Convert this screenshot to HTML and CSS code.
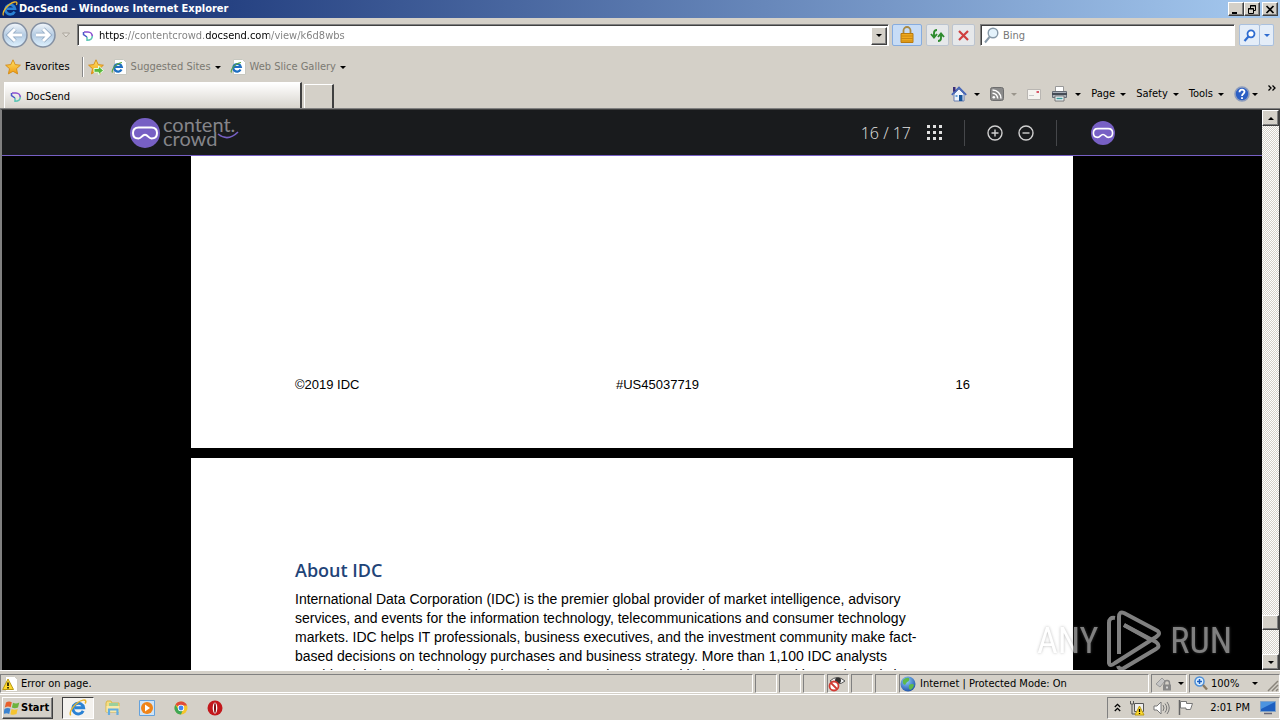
FILE: index.html
```html
<!DOCTYPE html>
<html lang="en">
<head>
<meta charset="utf-8">
<title>DocSend - Windows Internet Explorer</title>
<link rel="stylesheet" href="styles.css">
</head>
<body>
<svg class="defs" aria-hidden="true">
  <defs>
    <linearGradient id="gold" x1="0" y1="0" x2="0" y2="1"><stop offset="0" stop-color="#ffe46a"/><stop offset="1" stop-color="#f09a10"/></linearGradient>
    <linearGradient id="orb" x1="0" y1="0" x2="0" y2="1"><stop offset="0" stop-color="#f4f8fc"/><stop offset=".5" stop-color="#b4cbe2"/><stop offset="1" stop-color="#dff2ff"/></linearGradient>
    <radialGradient id="globe" cx=".4" cy=".3" r=".8"><stop offset="0" stop-color="#8fd0ff"/><stop offset="1" stop-color="#1546a0"/></radialGradient>
  </defs>
  <symbol id="i-e" viewBox="0 0 16 16">
    <path d="M12.6 10.6A4.8 4.8 0 1 1 13 7.800H5" fill="none" stroke="#2a82d4" stroke-width="2.600"/>
    <path d="M1.500 14.500C-.5 11 6 2.500 12.500 1c3-.6 2.700 1.500 1.800 3" fill="none" stroke="#e8b52c" stroke-width="1.300"/>
  </symbol>
  <symbol id="i-page-e" viewBox="0 0 16 16">
    <path d="M3.500 .5h9l3 3v12h-12z" fill="#fff" stroke="#c8c8c0"/>
    <path d="M10.500 10.500A3.800 3.800 0 1 1 10.800 8H4" fill="none" stroke="#1e6fc2" stroke-width="2.200"/>
    <path d="M1.500 13.500C0 11 5 4 11 3.500" fill="none" stroke="#58a63c" stroke-width="1.100"/>
  </symbol>
  <symbol id="i-docsend" viewBox="0 0 12 12">
    <path d="M2 2h4a4.300 4.300 0 0 1 4.300 4.300" fill="none" stroke="#8a4fd0" stroke-width="1.700"/>
    <path d="M10.300 6c0 2.800-1.600 4.300-5.300 4.300V7" fill="none" stroke="#5cc4b4" stroke-width="1.500"/>
    <path d="M1.500 2v2.500L5 7" fill="none" stroke="#4a58c8" stroke-width="1.500"/>
  </symbol>
  <symbol id="i-star" viewBox="0 0 16 16">
    <path d="M8 .8l2.200 4.800 5.200.6-3.900 3.500 1.100 5.200L8 12.300l-4.600 2.600 1.100-5.200L.6 6.200l5.200-.6z" fill="url(#gold)" stroke="#d48a14" stroke-width=".9"/>
  </symbol>
  <symbol id="i-mask" viewBox="0 0 30 30">
    <circle cx="15" cy="15" r="15" fill="#7760c4"/>
    <path d="M8.500 9.500h13q5.500 0 5.500 5.500t-5.500 5.500c-3 0-3.500-3.700-6.500-3.700s-3.500 3.700-6.500 3.700Q3 20.500 3 15t5.500-5.500z" fill="none" stroke="#fff" stroke-width="2"/>
  </symbol>
  <symbol id="i-win" viewBox="0 0 16 16">
    <path d="M2 2.500C4 1 6 1.200 7.800 2.200L6.700 7.300C5 6.300 3 6.200.8 7.500z" fill="#e8602c"/>
    <path d="M9 2.700c2 1 4 .9 6.300-.2L14 7.600c-2.300 1-4.200 1-6.100 0z" fill="#6cb33e"/>
    <path d="M.5 9C2.700 7.700 4.700 7.800 6.400 8.700L5.200 14C3.300 12.700 1.500 13-.6 14z" fill="#3b83d0"/>
    <path d="M7.600 9c2 .9 4 .9 6.100 0L12.500 14c-2.300 1-4.200 1-6.100.2z" fill="#f5c431"/>
  </symbol>
</svg>

<div class="browser">
  <header class="titlebar">
    <svg class="ic16"><use href="#i-e"/></svg>
    <h1 class="title">DocSend - Windows Internet Explorer</h1>
    <div class="window-buttons">
      <button class="bevel winbtn" aria-label="Minimize"><svg width="10" height="9"><path d="M1 7h5v2H1z"/></svg></button>
      <button class="bevel winbtn" aria-label="Restore"><svg width="10" height="9"><path d="M3.500 3V.5h5v5H7M3 1h6M1.500 3.500h5v5h-5zM1 4h6" fill="none" stroke="#000"/></svg></button>
      <button class="bevel winbtn winbtn-close" aria-label="Close"><svg width="10" height="9"><path d="M1.500 1l7 7M8.500 1l-7 7" fill="none" stroke="#000" stroke-width="1.700"/></svg></button>
    </div>
  </header>

  <nav class="address-row" aria-label="Navigation">
    <div class="travel">
      <button class="plain" aria-label="Back"><svg width="26" height="26" viewBox="0 0 26 26"><circle cx="13" cy="13" r="12" fill="url(#orb)" stroke="#8490a2" stroke-width="1.500"/><path d="M13 7l-6 6 6 6M8 13h12" fill="none" stroke="#8fa6c0" stroke-width="4.500"/><path d="M13 7l-6 6 6 6M8 13h12" fill="none" stroke="#fff" stroke-width="3"/></svg></button>
      <button class="plain" aria-label="Forward"><svg width="26" height="26" viewBox="0 0 26 26"><circle cx="13" cy="13" r="12" fill="url(#orb)" stroke="#8490a2" stroke-width="1.500"/><path d="M13 7l6 6-6 6M18 13H6" fill="none" stroke="#8fa6c0" stroke-width="4.500"/><path d="M13 7l6 6-6 6M18 13H6" fill="none" stroke="#fff" stroke-width="3"/></svg></button>
      <button class="plain" aria-label="Recent pages"><svg width="8" height="6"><path d="M.5 1h7L4 5z" fill="#e8e4de" stroke="#aaa59c"/></svg></button>
    </div>
    <div class="field address">
      <svg class="ic12"><use href="#i-docsend"/></svg>
      <input class="url" type="text" aria-label="Address" value="https://contentcrowd.docsend.com/view/k6d8wbs">
      <button class="bevel drop" aria-label="Show addresses"><i class="caret"></i></button>
    </div>
    <button class="soft lock" aria-label="Security report"><svg width="14" height="18" viewBox="0 0 14 18"><path d="M3.500 8V4.500a3.500 3.500 0 0 1 7 0V8" fill="none" stroke="#a98a45" stroke-width="1.800"/><path d="M1 7.500h12v9H1z" fill="#efa91f" stroke="#b87a10"/><path d="M1 10h12M1 12.500h12M1 15h12" stroke="#c98813"/></svg></button>
    <button class="soft" aria-label="Refresh"><svg width="15" height="15" viewBox="0 0 15 15"><path d="M7 2Q4 2 4 5v4M1 6l3 3.500L7 6" fill="none" stroke="#2e8b2e" stroke-width="1.900"/><path d="M8 13q3 0 3-3V6M8 9l3-3.500L14 9" fill="none" stroke="#2e8b2e" stroke-width="1.900"/></svg></button>
    <button class="soft" aria-label="Stop"><svg width="13" height="13"><path d="M2 2l9 9M11 2l-9 9" stroke="#cf3f3f" stroke-width="2.200"/></svg></button>
    <div class="field search">
      <svg width="15" height="17" viewBox="0 0 15 17"><circle cx="9" cy="6" r="4.800" fill="#e4f2fb" stroke="#8799a8" stroke-width="1.400"/><path d="M5.500 10L1 15.500" stroke="#8799a8" stroke-width="2"/></svg>
      <input type="text" aria-label="Search" placeholder="Bing">
    </div>
    <div class="search-go">
      <button class="soft" aria-label="Go"><svg width="13" height="13"><circle cx="8" cy="4.800" r="3.500" fill="#fff" stroke="#2e6cd0" stroke-width="1.800"/><path d="M5.500 7.500L1.500 12" stroke="#2e6cd0" stroke-width="2.200"/></svg></button>
      <button class="soft soft-narrow" aria-label="Search options"><i class="caret caret-blue"></i></button>
    </div>
  </nav>

  <nav class="favorites-row" aria-label="Favorites">
    <button class="plain fav"><svg class="ic16"><use href="#i-star"/></svg>Favorites</button>
    <span class="vline"></span>
    <button class="plain" aria-label="Add to Favorites Bar"><svg width="16" height="16" viewBox="0 0 16 16"><use href="#i-star"/><path d="M6 9.500h4.500V7l5 4.500-5 4.300v-2.500H6z" fill="#58b83c" stroke="#e8ffe0"/></svg></button>
    <button class="plain fav dim"><svg class="ic16"><use href="#i-page-e"/></svg>Suggested Sites<i class="caret"></i></button>
    <button class="plain fav dim gallery"><svg class="ic16"><use href="#i-page-e"/></svg>Web Slice Gallery<i class="caret"></i></button>
  </nav>

  <div class="tab-row">
    <button class="tab"><svg class="ic12"><use href="#i-docsend"/></svg>DocSend</button>
    <button class="new-tab" aria-label="New tab"></button>
    <div class="commands">
      <button class="plain cmd" aria-label="Home"><svg width="16" height="16" viewBox="0 0 16 16"><path d="M3 8v7h10V8L8 3z" fill="#eef4fc" stroke="#6a7fb0"/><path d="M.8 8.800L8 1.500l7.200 7.300" fill="none" stroke="#4565b8" stroke-width="1.700"/><path d="M2 1h2.500v4L2 6z" fill="#3a2d78"/><path d="M8 9h3.500v6H8z" fill="#17549a"/><path d="M4.500 9h2v2h-2z" fill="#66a3d8"/></svg><i class="caret"></i></button>
      <button class="plain cmd" aria-label="Feeds"><svg width="14" height="14" viewBox="0 0 14 14"><rect x=".5" y=".5" width="13" height="13" rx="2" fill="#8a8a8a" stroke="#6e6e6e"/><circle cx="3.800" cy="10.300" r="1.300" fill="#fff"/><path d="M2.500 6.300a5.200 5.200 0 0 1 5.200 5.200M2.500 3a8.500 8.500 0 0 1 8.500 8.500" fill="none" stroke="#fff" stroke-width="1.500"/></svg><i class="caret caret-dim"></i></button>
      <button class="plain cmd" aria-label="Read mail"><svg width="14" height="11"><path d="M.5 .5h13v10H.5z" fill="#f6f4f0" stroke="#b9b6b2"/><path d="M9.500 2H12v2H9.500z" fill="#d85a6a"/><path d="M2 6.500h5" stroke="#c8c8c8"/></svg></button>
      <button class="plain cmd" aria-label="Print"><svg width="17" height="16" viewBox="0 0 17 16"><path d="M4.500 .5h8V6h-8z" fill="#fff" stroke="#999"/><path d="M1.500 5.500h14v6h-14z" fill="#aab0b8" stroke="#666c76"/><path d="M1 7h15v2H1z" fill="#454b56"/><path d="M4 10h9v5H4z" fill="#eef5fa" stroke="#777"/><path d="M5.500 12.500h6" stroke="#3d9a9a" stroke-width="1.500"/></svg><i class="caret"></i></button>
      <button class="plain cmd menu">Page<i class="caret"></i></button>
      <button class="plain cmd menu">Safety<i class="caret"></i></button>
      <button class="plain cmd menu">Tools<i class="caret"></i></button>
      <button class="plain cmd help" aria-label="Help"><svg width="16" height="16" viewBox="0 0 16 16"><circle cx="8" cy="8" r="7" fill="#2c5fc4" stroke="#8d9cbc" stroke-width="1.600"/><path d="M5.500 6.200c0-3.400 5-3.200 5-.4C10.500 7.800 8 7.600 8 10M8 11.200v1.800" fill="none" stroke="#fff" stroke-width="1.800"/></svg><i class="caret"></i></button>
      <button class="plain more" aria-label="More commands"><svg width="8" height="6"><path d="M.5 .5L3 3 .5 5.500M4.500 .5L7 3 4.500 5.500" fill="none" stroke="#000" stroke-width="1.300"/></svg></button>
    </div>
  </div>

  <div class="window">
    <main class="viewer">
      <div class="viewer-bar">
        <a class="brand" href="#" aria-label="Content Crowd">
          <svg width="30" height="30"><use href="#i-mask"/></svg>
          <span class="brand-name"><span>content.</span><span>crowd<svg width="22" height="9"><path d="M1 3q10 8 20-2" fill="none" stroke="#7760c4" stroke-width="1.600"/></svg></span></span>
        </a>
        <div class="viewer-tools">
          <span class="count">16 / 17</span>
          <button class="plain" aria-label="Thumbnails"><svg width="15" height="15" fill="#e0e0e0"><path d="M0 0h3v3H0zM6 0h3v3H6zM12 0h3v3h-3zM0 6h3v3H0zM6 6h3v3H6zM12 6h3v3h-3zM0 12h3v3H0zM6 12h3v3H6zM12 12h3v3h-3z"/></svg></button>
          <span class="rule"></span>
          <button class="plain zoom-in" aria-label="Zoom in"><svg width="16" height="16" fill="none" stroke="#d0d0d0" stroke-width="1.400"><circle cx="8" cy="8" r="7"/><path d="M4.500 8h7M8 4.500v7"/></svg></button>
          <button class="plain zoom-out" aria-label="Zoom out"><svg width="16" height="16" fill="none" stroke="#d0d0d0" stroke-width="1.400"><circle cx="8" cy="8" r="7"/><path d="M4.500 8h7"/></svg></button>
          <span class="rule"></span>
          <a class="avatar" href="#" aria-label="Account"><svg width="24" height="24"><use href="#i-mask"/></svg></a>
        </div>
      </div>
      <div class="pages">
        <section class="sheet sheet-end">
          <footer class="sheet-footer"><span>©2019 IDC</span><span>#US45037719</span><span>16</span></footer>
        </section>
        <section class="sheet">
          <h2>About IDC</h2>
          <p>International Data Corporation (IDC) is the premier global provider of market intelligence, advisory<br>services, and events for the information technology, telecommunications and consumer technology<br>markets. IDC helps IT professionals, business executives, and the investment community make fact-<br>based decisions on technology purchases and business strategy. More than 1,100 IDC analysts<br>provide global, regional, and local expertise on technology and industry opportunities and trends in</p>
        </section>
      </div>
    </main>
    <div class="scrollbar">
      <button class="bevel scroll-btn" aria-label="Scroll up"><i class="caret caret-up"></i></button>
      <div class="track"><div class="bevel thumb"></div></div>
      <button class="bevel scroll-btn" aria-label="Scroll down"><i class="caret"></i></button>
    </div>
    <div class="watermark">
      <span>ANY</span>
      <svg width="56" height="62" viewBox="0 0 56 62" fill="none" stroke="#fff" stroke-width="4" stroke-linejoin="round"><path d="M9 8Q3 7 3 13V53Q4 57 9 53L50 27Q56 23 50 20L18 3Q13 1 13 7V44"/><path d="M18 15L50 32Q55 36 50 39L18 58Q13 60 12 56"/><path d="M18 15L43 29"/></svg>
      <span>RUN</span>
    </div>
  </div>

  <footer class="status">
    <div class="cell cell-main"><svg width="16" height="16"><path d="M3.500 .5h9l3 3v12h-12z" fill="#fff" stroke="#d0cdc4"/><path d="M6 3l5.500 10.500H.7z" fill="#ffd92e" stroke="#b99a12"/><path d="M6 6.500v3.500M6 11v1.500" stroke="#000" stroke-width="1.500"/></svg>Error on page.</div>
    <div class="cell"></div><div class="cell"></div><div class="cell"></div>
    <div class="cell"><svg width="18" height="17"><path d="M2 6q7-7 15 0-7 6-15 0z" fill="#f4f4f4" stroke="#555"/><circle cx="10" cy="5.500" r="3" fill="#333"/><circle cx="6" cy="11" r="4.500" fill="#fff" stroke="#d23a34" stroke-width="1.800"/><path d="M3 8l6 6" stroke="#d23a34" stroke-width="1.800"/></svg></div>
    <div class="cell"></div><div class="cell"></div>
    <div class="cell cell-zone"><svg width="16" height="16"><circle cx="8" cy="8" r="7.500" fill="url(#globe)"/><path d="M3 4q3-3 6-2 1 3-2 4l-2 3q-3-1-2-5zM9 9q4-2 5 0-1 4-4 5-2-2-1-5z" fill="#5fb94a"/></svg>Internet | Protected Mode: On</div>
    <div class="cell cell-filter"><svg width="17" height="16"><path d="M1 8l6-6 3 3-5 6z" fill="#c5c5c5" stroke="#999"/><path d="M9.500 9V7a2.500 2.500 0 0 1 5 0v2" fill="none" stroke="#888" stroke-width="1.400"/><path d="M8 8.500h8v6H8z" fill="#888"/><path d="M12 10.500v2" stroke="#fff" stroke-width="1.300"/></svg><i class="caret"></i></div>
    <div class="cell cell-zoom"><svg width="14" height="15"><circle cx="5.500" cy="5.500" r="4.500" fill="#dcefff" stroke="#4d8fd8" stroke-width="1.500"/><path d="M3 5.500h5M5.500 3v5" stroke="#1c5fc0" stroke-width="1.500"/><path d="M9 9l4 4.500" stroke="#8b7a62" stroke-width="2.400"/></svg><span>100%</span><i class="caret"></i><svg class="grip" width="12" height="12"><path d="M1 11L11 1M5 11l6-6M9 11l2-2" stroke="#8a857c" stroke-width="1.500"/></svg></div>
  </footer>

  <nav class="taskbar" aria-label="Taskbar">
    <button class="bevel start"><svg class="ic16"><use href="#i-win"/></svg>Start</button>
    <button class="running" aria-label="Internet Explorer"><svg width="18" height="18"><use href="#i-e"/></svg></button>
    <div class="quick">
      <button class="plain" aria-label="Explorer"><svg width="16" height="16"><path d="M1 3l1-2h4l1 2h7v9H1z" fill="#f5dd82" stroke="#d8b84c"/><path d="M4 3h9v4H4z" fill="#9bd09c"/><path d="M1.500 6h13v6h-13z" fill="#f9e9a8"/><path d="M4 15V9.500h8.500V15" fill="none" stroke="#63ade0" stroke-width="2.200"/></svg></button>
      <button class="plain" aria-label="Media Player"><svg width="16" height="16"><path d="M.5 .5h15v15H.5z" fill="#cfe4f7" stroke="#65a2dc"/><circle cx="8" cy="8" r="6" fill="#f08418"/><path d="M6 4.500l5 3.500-5 3.500z" fill="#fff"/></svg></button>
      <button class="plain" aria-label="Chrome"><svg width="16" height="16"><circle cx="8" cy="8" r="6.500" fill="#f5c52c"/><path d="M8 8L2.400 4.700A6.500 6.500 0 0 1 14 5.500H8z" fill="#e04a3a"/><path d="M2.400 4.700A6.500 6.500 0 0 0 8 14.500L10 9.500H5.500z" fill="#3fa755"/><circle cx="8" cy="8" r="3.200" fill="#fff"/><circle cx="8" cy="8" r="2.400" fill="#4285f4"/></svg></button>
      <button class="plain" aria-label="Opera"><svg width="16" height="16"><circle cx="8" cy="8" r="7.500" fill="#c3181c"/><ellipse cx="8" cy="8" rx="2.300" ry="5.500" fill="#fff"/><ellipse cx="8" cy="8" rx="1" ry="5" fill="#7a1012"/></svg></button>
    </div>
    <div class="tray">
      <svg width="7" height="9"><path d="M.8 4L3.500 1.300 6.200 4M.8 8l2.700-2.700L6.200 8" fill="none" stroke="#000" stroke-width="1.300"/></svg>
      <svg width="16" height="16"><path d="M1.500 1v3h3V1M3 4v10h3" fill="none" stroke="#555"/><path d="M5.500 3.500h9v8h-9z" fill="#eee" stroke="#555"/><path d="M10.500 6l4.500 9H6z" fill="#ffdb2e" stroke="#b99a12"/><path d="M10.500 9v3M10.500 13v1" stroke="#000" stroke-width="1.300"/></svg>
      <svg width="17" height="14"><path d="M1 5h3l4-4v12L4 9H1z" fill="#fff" stroke="#777"/><path d="M10 4q2 3 0 6M12 2.500q3.500 4.500 0 9M14 1q4.500 6 0 12" fill="none" stroke="#777"/></svg>
      <svg width="16" height="15"><path d="M1.500 0v15" stroke="#666" stroke-width="1.500"/><path d="M2.500 1.500h6v2h6l-2 6H8V8H2.500z" fill="#fff" stroke="#777"/></svg>
      <time>2:01 PM</time>
      <svg width="16" height="14"><path d="M.5 .5h15v10H.5z" fill="#1d5fc0" stroke="#7fa2c8"/><path d="M1 1h14L1 8z" fill="#4c94e0"/><path d="M4 12.500h8" stroke="#667" stroke-width="1.500"/></svg>
    </div>
  </nav>
</div>
</body>
</html>
```
FILE: styles.css
```css
* { box-sizing: border-box; }

body {
  margin: 0;
  font: 11px/14px "DejaVu Sans Condensed", "DejaVu Sans", sans-serif;
  color: #000;
  background: #d4d0c8;
}

svg { display: block; flex: none; }
button, input { font: inherit; color: inherit; padding: 0; margin: 0; border: 0; background: none; }
button { display: flex; align-items: center; justify-content: center; }
.defs { position: absolute; width: 0; height: 0; }
.ic16 { width: 16px; height: 16px; }
.ic12 { width: 12px; height: 12px; }

.browser { display: flex; flex-direction: column; height: 100vh; overflow: hidden; }

.bevel {
  background: #d4d0c8;
  border: 1px solid;
  border-color: #fff #404040 #404040 #fff;
  box-shadow: inset -1px -1px #808080;
}

.caret {
  flex: none;
  border: 3px solid transparent;
  border-top-color: #000;
  border-bottom-width: 0;
}
.caret-up { border-width: 0 3px 3px; border-bottom-color: #000; }
.caret-dim { border-top-color: #9a958c; }
.caret-blue { border-top-color: #2e6cd0; }

/* Title bar */
.titlebar {
  display: flex;
  align-items: center;
  gap: 1px;
  height: 18px;
  padding: 0 2px;
  background: linear-gradient(90deg, #0a246a, #a6caf0);
}
.title { flex: 1; margin: 0; font-size: 11px; color: #fff; }
.window-buttons { display: flex; }
.winbtn { width: 16px; height: 14px; }
.winbtn-close { margin-left: 2px; }

/* Address row */
.address-row { display: flex; align-items: center; height: 34px; padding: 0 6px 0 2px; }
.travel { display: flex; align-items: center; gap: 2px; width: 75px; }
.travel button:last-child { margin-left: 4px; }
.field {
  display: flex;
  align-items: center;
  height: 22px;
  background: #fff;
  border: 1px solid;
  border-color: #808080 #fff #fff #808080;
  box-shadow: inset 1px 1px #404040;
}
.field input { flex: 1; min-width: 0; height: 18px; outline: none; }
.address { flex: 1; padding: 1px 1px 0 4px; gap: 5px; }
.url {
  color: transparent;
  background: linear-gradient(90deg, #000 26px, #7d7d7d 26px 107px, #000 107px 170px, #7d7d7d 170px);
  background-clip: text;
  -webkit-background-clip: text;
}
.drop { width: 16px; height: 18px; }
.soft {
  width: 23px;
  height: 22px;
  background: #e6e8ea;
  border: 1px solid #bcc4cf;
  border-radius: 2px;
  margin-left: 3px;
}
.lock { width: 30px; margin-right: 1px; background: #c7dcf6; border-color: #86acdf; }
.search { width: 255px; margin-left: 5px; padding-left: 3px; gap: 4px; }
.search input::placeholder { color: #777; opacity: 1; }
.search-go { display: flex; margin-left: 4px; }
.search-go .soft { width: 21px; margin-left: 0; background: #e4edf8; border-color: #a9c0de; }
.search-go .soft-narrow { width: 14px; border-left: 0; }

/* Favorites row */
.favorites-row { display: flex; align-items: center; height: 30px; padding-left: 5px; }
.fav { gap: 4px; }
.vline { width: 2px; height: 20px; margin: 0 4px 0 12px; border-left: 1px solid #888; border-right: 1px solid #fff; }
.dim { color: #7b7972; margin-left: 7px; }
.gallery { margin-left: 9px; }

/* Tabs and command bar */
.tab-row { display: flex; align-items: flex-end; height: 27px; padding-left: 4px; border-bottom: 1px solid #808080; }
.tab {
  flex: 0 0 298px;
  height: 26px;
  justify-content: flex-start;
  gap: 4px;
  padding: 2px 0 0 5px;
  background: linear-gradient(#fff, #d8d4cd);
  border-top: 1px solid #fff;
  border-left: 1px solid #fff;
  border-right: 2px solid #404040;
}
.new-tab { width: 30px; height: 24px; margin-left: 2px; border: 1px solid #fff; border-right: 2px solid #404040; border-bottom: 0; }
.commands { display: flex; align-items: center; margin-left: auto; height: 27px; padding: 0 4px 1px 0; gap: 10px; }
.cmd { gap: 7px; }
.menu { gap: 5px; }
.help { gap: 2px; }
.more { align-self: flex-start; padding-top: 4px; }

/* Window contents */
.window {
  position: relative;
  display: flex;
  flex: 1;
  min-height: 0;
  border: solid #404040;
  border-width: 1px 1px 0 2px;
  border-left-color: #808080;
}
.viewer { flex: 1; min-width: 0; display: flex; flex-direction: column; background: #000; overflow: hidden; }
.viewer-bar {
  flex: none;
  display: flex;
  justify-content: space-between;
  height: 46px;
  padding: 0 147px 0 128px;
  background: #191b1d;
  border-bottom: 1px solid #7760c4;
}
.brand { display: flex; align-items: center; gap: 3px; color: #85858a; text-decoration: none; }
.brand-name { display: flex; flex-direction: column; font: 20px/14px Lato, sans-serif; padding-bottom: 4px; }
.brand-name span { display: flex; }
.viewer-tools { display: flex; align-items: center; color: #e4e4e4; }
.count { margin-right: 16px; font: 300 16px/24px "Open Sans", sans-serif; }
.rule { width: 1px; height: 26px; margin: 0 22px; background: #45474a; }
.zoom-out { margin-left: 15px; }
.avatar { margin-left: 12px; }

.pages { display: flex; flex-direction: column; align-items: center; gap: 10px; min-height: 0; }
.sheet {
  flex: none;
  width: 70%;
  padding: 100px 104px;
  background: #fff;
  font: 14px/19px "Liberation Sans", Arial, sans-serif;
}
.sheet-end { padding: 219px 103px 54px 104px; }
.sheet-footer { display: flex; justify-content: space-between; font-size: 13px; }
.sheet h2 { margin: 0 0 7px; font: 600 18px/25px "Open Sans", sans-serif; color: #1f4478; }
.sheet p { margin: 0; white-space: nowrap; }

.scrollbar { display: flex; flex-direction: column; width: 17px; }
.scroll-btn { width: 100%; height: 16px; }
.track {
  flex: 1;
  display: flex;
  align-items: flex-end;
  padding-bottom: 24px;
  background: repeating-conic-gradient(#d4d0c8 0 25%, #fff 0 50%) 0 0 / 2px 2px;
}
.thumb { width: 100%; height: 15px; }

.watermark {
  position: absolute;
  right: 47px;
  bottom: -2px;
  display: flex;
  align-items: center;
  gap: 8px;
  color: #fff;
  opacity: .5;
  font: 36px/48px "Liberation Sans Narrow", "Roboto Condensed", "DejaVu Sans Condensed", sans-serif;
  text-shadow: 0 0 3px #777;
}

/* Status bar */
.status { display: flex; gap: 2px; height: 24px; padding: 3px 0 1px; border-top: 1px solid #fff; }
.cell {
  display: flex;
  align-items: center;
  width: 22px;
  border: 1px solid;
  border-color: #808080 #fff #fff #808080;
}
.cell-main { flex: 1; gap: 3px; padding-left: 1px; }
.cell-zone { width: 250px; gap: 4px; }
.cell-filter { width: 36px; gap: 6px; padding-left: 3px; }
.cell-zoom { width: 91px; gap: 3px; padding-left: 4px; }
.cell-zoom .caret { margin-left: 10px; }
.grip { margin-left: auto; align-self: flex-end; }

/* Taskbar */
.taskbar { display: flex; align-items: center; height: 26px; padding-left: 2px; border-top: 1px solid #fff; }
.start { height: 22px; padding: 0 3px 0 1px; gap: 1px; font-weight: 700; }
.running { width: 32px; height: 22px; margin-left: 9px; background: #f4f2ee; border: 1px solid; border-color: #404040 #fff #fff #404040; }
.quick { display: flex; gap: 18px; margin-left: 11px; }
.tray {
  display: flex;
  align-items: center;
  height: 22px;
  margin-left: auto;
  padding: 0 3px 0 6px;
  gap: 8px;
  border: 1px solid;
  border-color: #808080 #fff #fff #808080;
}
.tray time { margin: 0 2px 0 8px; }
```
